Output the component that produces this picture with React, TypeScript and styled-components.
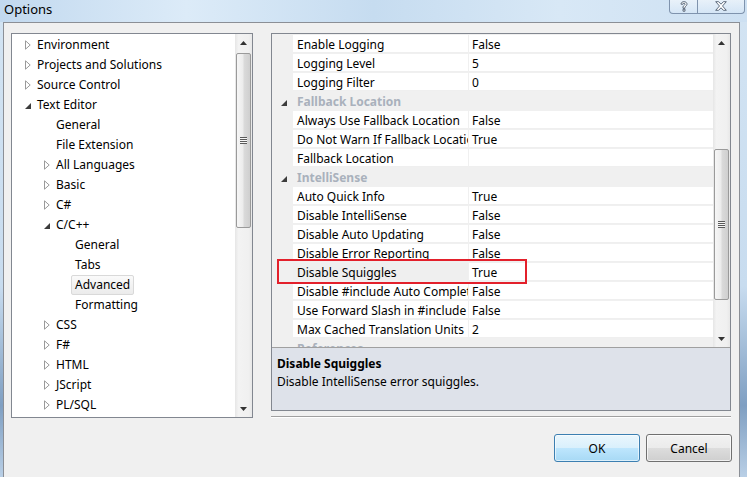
import React from 'react'
import styled, { createGlobalStyle } from 'styled-components'

const GlobalStyle = createGlobalStyle`
  html, body {
    margin: 0;
    padding: 0;
  }
  body {
    font-family: "Noto Sans", "Liberation Sans", sans-serif;
    font-size: 12px;
    color: #000;
  }
`

type TreeItem = {
  label: string
  level: number
  arrow?: 'closed' | 'open'
  selected?: boolean
}

const tree: TreeItem[] = [
  { label: 'Environment', level: 0, arrow: 'closed' },
  { label: 'Projects and Solutions', level: 0, arrow: 'closed' },
  { label: 'Source Control', level: 0, arrow: 'closed' },
  { label: 'Text Editor', level: 0, arrow: 'open' },
  { label: 'General', level: 1 },
  { label: 'File Extension', level: 1 },
  { label: 'All Languages', level: 1, arrow: 'closed' },
  { label: 'Basic', level: 1, arrow: 'closed' },
  { label: 'C#', level: 1, arrow: 'closed' },
  { label: 'C/C++', level: 1, arrow: 'open' },
  { label: 'General', level: 2 },
  { label: 'Tabs', level: 2 },
  { label: 'Advanced', level: 2, selected: true },
  { label: 'Formatting', level: 2 },
  { label: 'CSS', level: 1, arrow: 'closed' },
  { label: 'F#', level: 1, arrow: 'closed' },
  { label: 'HTML', level: 1, arrow: 'closed' },
  { label: 'JScript', level: 1, arrow: 'closed' },
  { label: 'PL/SQL', level: 1, arrow: 'closed' },
]

type PropItem =
  | { kind: 'cat'; name: string }
  | { kind: 'row'; name: string; value: string; selected?: boolean }

const properties: PropItem[] = [
  { kind: 'row', name: 'Enable Logging', value: 'False' },
  { kind: 'row', name: 'Logging Level', value: '5' },
  { kind: 'row', name: 'Logging Filter', value: '0' },
  { kind: 'cat', name: 'Fallback Location' },
  { kind: 'row', name: 'Always Use Fallback Location', value: 'False' },
  { kind: 'row', name: 'Do Not Warn If Fallback Location Is Used', value: 'True' },
  { kind: 'row', name: 'Fallback Location', value: '' },
  { kind: 'cat', name: 'IntelliSense' },
  { kind: 'row', name: 'Auto Quick Info', value: 'True' },
  { kind: 'row', name: 'Disable IntelliSense', value: 'False' },
  { kind: 'row', name: 'Disable Auto Updating', value: 'False' },
  { kind: 'row', name: 'Disable Error Reporting', value: 'False' },
  { kind: 'row', name: 'Disable Squiggles', value: 'True', selected: true },
  { kind: 'row', name: 'Disable #include Auto Complete', value: 'False' },
  { kind: 'row', name: 'Use Forward Slash in #include Auto Complete', value: 'False' },
  { kind: 'row', name: 'Max Cached Translation Units', value: '2' },
  { kind: 'cat', name: 'References' },
]

const Screen = styled.div`
  position: relative;
  width: 747px;
  height: 477px;
  overflow: hidden;
  background: linear-gradient(180deg, #d3e4f3 0%, #c8dcef 60%, #7f9fc2 85%, #b9cfe6 100%);
`

const TitleBar = styled.div`
  height: 22px;
  display: flex;
  align-items: flex-start;
  background: linear-gradient(90deg, #c2d9ef 0%, #dcebf8 25%, #c6dcf0 50%, #d8e8f6 75%, #cde0f2 100%);
`

const Title = styled.div`
  padding: 1px 0 0 4px;
  font-size: 13px;
  line-height: 17px;
  color: #000;
`

const CaptionButtons = styled.div`
  margin-left: auto;
  margin-right: 2px;
  margin-top: -1px;
  display: flex;
  height: 14px;
  border: 1px solid #7f93ad;
  border-top: none;
  border-radius: 0 0 4px 4px;
  background: linear-gradient(180deg, rgba(255, 255, 255, 0.55), rgba(220, 235, 250, 0.4));
  overflow: hidden;
`

const CaptionButton = styled.div<{ $w: number }>`
  width: ${(p) => p.$w}px;
  display: flex;
  align-items: center;
  justify-content: center;
  & + & {
    border-left: 1px solid #7f93ad;
  }
`

const Window = styled.div`
  margin-left: 3px;
  width: 737px;
  height: 455px;
  box-sizing: border-box;
  border: 1px solid #8b8f96;
  border-bottom: none;
  background: #f0f0f0;
  padding: 10px 7px 0 7px;
`

const Main = styled.div`
  display: flex;
  gap: 18px;
  height: 385px;
`

const TreePanel = styled.div`
  width: 242px;
  box-sizing: border-box;
  border: 1px solid #828790;
  background: #fff;
  display: flex;
`

const TreeList = styled.div`
  flex: 1;
  overflow: hidden;
  padding-top: 1px;
`

const TreeRow = styled.div<{ $level: number }>`
  height: 20px;
  display: flex;
  align-items: center;
  padding-left: ${(p) => 13 + p.$level * 19}px;
  white-space: nowrap;
`

const Expander = styled.div`
  width: 12px;
  height: 20px;
  display: flex;
  align-items: center;
  flex: none;
`

const TreeLabel = styled.span<{ $selected?: boolean }>`
  margin-left: -4px;
  padding: 0 3px;
  height: 18px;
  line-height: 18px;
  border: 1px solid ${(p) => (p.$selected ? '#d9d9d9' : 'transparent')};
  border-radius: 2px;
  background: ${(p) => (p.$selected ? 'linear-gradient(180deg, #fafafa, #ebebeb)' : 'transparent')};
`

const ScrollBar = styled.div`
  width: 17px;
  flex: none;
  display: flex;
  flex-direction: column;
  background: linear-gradient(90deg, #e6e6e6 0%, #f3f3f3 20%, #f0f0f0 80%, #e8e8e8 100%);
`

const ScrollArrow = styled.div`
  height: 17px;
  flex: none;
  display: flex;
  align-items: center;
  justify-content: center;
`

const Thumb = styled.div`
  margin: 0 1px;
  box-sizing: border-box;
  border: 1px solid #9a9a9a;
  border-radius: 2px;
  background: linear-gradient(90deg, #f6f6f6 0%, #ececec 45%, #dadada 55%, #cfcfcf 100%);
  display: flex;
  align-items: center;
  justify-content: center;
  flex: none;
`

const Grip = styled.div`
  width: 7px;
  height: 7px;
  background: repeating-linear-gradient(180deg, #5a5a5a 0 1px, #f6f6f6 1px 2px);
`

const RightColumn = styled.div`
  width: 460px;
  display: flex;
  flex-direction: column;
`

const GridFrame = styled.div`
  position: relative;
  height: 378px;
  box-sizing: border-box;
  border: 1px solid #828790;
  display: flex;
  flex-direction: column;
`

const GridBody = styled.div`
  height: 313px;
  display: flex;
  background: #f0f0f0;
`

const GridRows = styled.div`
  flex: 1;
  overflow: hidden;
  padding-top: 1px;
`

const CategoryRow = styled.div`
  height: 19px;
  display: flex;
  align-items: center;
  background: #f0f0f0;
  padding-left: 9px;
`

const CategoryName = styled.span`
  margin-left: 10px;
  font-weight: bold;
  color: #a9b1bc;
  white-space: nowrap;
`

const PropRow = styled.div`
  height: 19px;
  display: flex;
  padding-left: 21px;
  box-sizing: border-box;
`

const Cell = styled.div<{ $w?: number; $selected?: boolean }>`
  ${(p) => (p.$w ? `width: ${p.$w}px; flex: none;` : 'flex: 1;')}
  height: 18px;
  line-height: 19px;
  padding-left: ${(p) => (p.$w ? 4 : 3)}px;
  box-sizing: border-box;
  background: ${(p) => (p.$selected ? '#efefef' : '#fff')};
  border-bottom: 1px solid #efefef;
  ${(p) => (p.$w ? 'margin-right: 1px;' : '')}
  white-space: nowrap;
  overflow: hidden;
`

const Highlight = styled.div`
  position: absolute;
  left: 5px;
  top: 225px;
  width: 250px;
  height: 25px;
  box-sizing: border-box;
  border: 2px solid #e3202b;
  pointer-events: none;
`

const Description = styled.div`
  flex: 1;
  border-top: 1px solid #a0a0a0;
  background: #dee2ea;
  padding: 7px 5px 0;
`

const DescTitle = styled.div`
  font-weight: bold;
  line-height: 18px;
`

const DescText = styled.div`
  line-height: 18px;
`

const Rule = styled.div`
  margin-top: 5px;
  border-top: 1px solid #a0a0a0;
  border-bottom: 1px solid #fff;
`

const Footer = styled.div`
  margin-top: 16px;
  display: flex;
  justify-content: flex-end;
  gap: 6px;
`

const DialogButton = styled.button<{ $primary?: boolean }>`
  width: 86px;
  height: 28px;
  font-family: "Noto Sans", "Liberation Sans", sans-serif;
  font-size: 12px;
  color: #000;
  border-radius: 3px;
  border: 1px solid ${(p) => (p.$primary ? '#3c7fb1' : '#707070')};
  background: ${(p) =>
    p.$primary
      ? 'linear-gradient(180deg, #eaf6fd 0%, #d9f0fc 50%, #bee6fd 50%, #a7d9f5 100%)'
      : 'linear-gradient(180deg, #f2f2f2 0%, #ebebeb 50%, #dddddd 50%, #cfcfcf 100%)'};
  box-shadow: inset 0 0 0 1px ${(p) => (p.$primary ? 'rgba(255,255,255,0.6)' : 'rgba(255,255,255,0.7)')};
  padding: 0;
`

const ClosedArrow = () => (
  <svg width="6" height="10" viewBox="0 0 6 10">
    <path d="M0.5 0.8 L5.2 5 L0.5 9.2 Z" fill="#fff" stroke="#9a9a9a" strokeWidth="1" />
  </svg>
)

const OpenArrow = () => (
  <svg width="6" height="6" viewBox="0 0 6 6" style={{ marginTop: 2 }}>
    <path d="M6 0 L6 6 L0 6 Z" fill="#3c3c3c" />
  </svg>
)

const UpGlyph = () => (
  <svg width="7" height="4" viewBox="0 0 7 4">
    <path d="M3.5 0 L7 4 L0 4 Z" fill="#333" />
  </svg>
)

const DownGlyph = () => (
  <svg width="7" height="4" viewBox="0 0 7 4">
    <path d="M0 0 L7 0 L3.5 4 Z" fill="#333" />
  </svg>
)

const Scroller: React.FC<{ before: number; size: number }> = ({ before, size }) => (
  <ScrollBar>
    <ScrollArrow>
      <UpGlyph />
    </ScrollArrow>
    <div style={{ height: before, flex: 'none' }} />
    <Thumb style={{ height: size }}>
      <Grip />
    </Thumb>
    <div style={{ flex: 1 }} />
    <ScrollArrow>
      <DownGlyph />
    </ScrollArrow>
  </ScrollBar>
)

export default function App() {
  return (
    <Screen>
      <GlobalStyle />
      <TitleBar>
        <Title>Options</Title>
        <CaptionButtons>
          <CaptionButton $w={27}>
            <svg width="8" height="11" viewBox="0 0 8 11">
              <path
                d="M1 3.2 C1 1.5 2.3 0.7 4 0.7 C5.8 0.7 7 1.7 7 3.2 C7 4.6 5.4 5.2 5 6.2 L5 7.3 L3 7.3 L3 5.8 C3.5 4.6 5 4.2 5 3.2 C5 2.6 4.6 2.3 4 2.3 C3.4 2.3 3 2.7 3 3.2 Z M3 8.2 L5 8.2 L5 10.2 L3 10.2 Z"
                fill="#fff"
                stroke="#3b4a5e"
                strokeWidth="0.8"
              />
            </svg>
          </CaptionButton>
          <CaptionButton $w={46}>
            <svg width="12" height="10" viewBox="0 0 12 10">
              <path
                d="M0.7 0.7 L3.6 0.7 L6 3.2 L8.4 0.7 L11.3 0.7 L7.5 5 L11.3 9.3 L8.4 9.3 L6 6.8 L3.6 9.3 L0.7 9.3 L4.5 5 Z"
                fill="#fff"
                stroke="#3b4a5e"
                strokeWidth="0.8"
              />
            </svg>
          </CaptionButton>
        </CaptionButtons>
      </TitleBar>
      <Window>
        <Main>
          <TreePanel>
            <TreeList>
              {tree.map((item, i) => (
                <TreeRow key={i} $level={item.level}>
                  <Expander>
                    {item.arrow === 'closed' && <ClosedArrow />}
                    {item.arrow === 'open' && <OpenArrow />}
                  </Expander>
                  <TreeLabel $selected={item.selected}>{item.label}</TreeLabel>
                </TreeRow>
              ))}
            </TreeList>
            <Scroller before={2} size={175} />
          </TreePanel>
          <RightColumn>
            <GridFrame>
              <GridBody>
                <GridRows>
                  {properties.map((p, i) =>
                    p.kind === 'cat' ? (
                      <CategoryRow key={i}>
                        <OpenArrow />
                        <CategoryName>{p.name}</CategoryName>
                      </CategoryRow>
                    ) : (
                      <PropRow key={i}>
                        <Cell $w={175} $selected={p.selected}>
                          {p.name}
                        </Cell>
                        <Cell>{p.value}</Cell>
                      </PropRow>
                    )
                  )}
                </GridRows>
                <Scroller before={98} size={151} />
              </GridBody>
              <Description>
                <DescTitle>Disable Squiggles</DescTitle>
                <DescText>Disable IntelliSense error squiggles.</DescText>
              </Description>
              <Highlight />
            </GridFrame>
            <Rule />
          </RightColumn>
        </Main>
        <Footer>
          <DialogButton $primary>OK</DialogButton>
          <DialogButton>Cancel</DialogButton>
        </Footer>
      </Window>
    </Screen>
  )
}
